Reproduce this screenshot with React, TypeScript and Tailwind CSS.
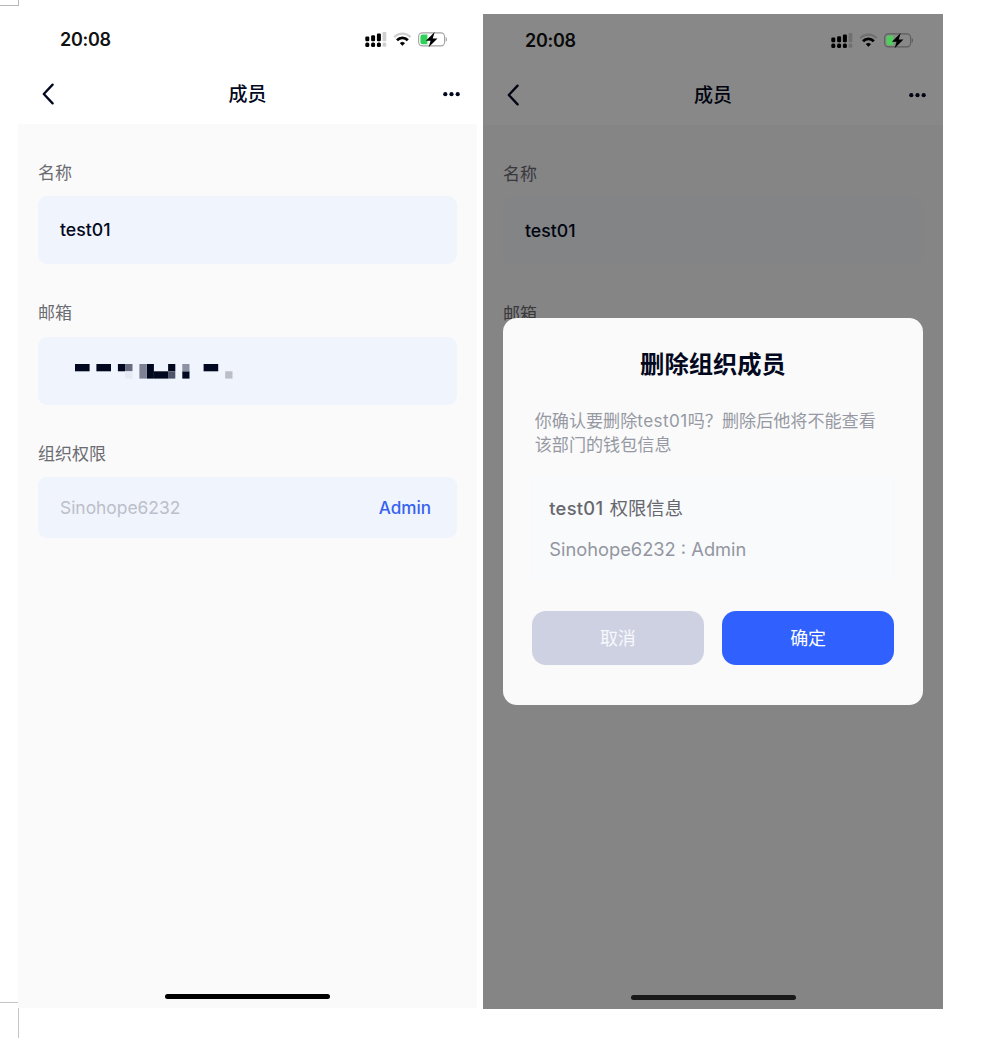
import React from "react";

function StatusIcons({ dimmed = false }: { dimmed?: boolean }) {
  const faint = dimmed ? "#707070" : "#cfcfcf";
  const outline = dimmed ? "#5c5c5c" : "#a3a3a3";
  return (
    <svg className={dimmed ? "relative z-10" : ""} width="82" height="17" viewBox="0 0 82 17" fill="none">
      <g fill="#000">
        <rect x="0.3" y="5.6" width="4" height="4.6" rx="1.2" />
        <rect x="6.1" y="4.2" width="4" height="6" rx="1.2" />
        <rect x="11.9" y="2.6" width="4" height="7.6" rx="1.2" />
        <rect x="0.3" y="11.6" width="4" height="4.4" rx="1.5" />
        <rect x="6.1" y="11.6" width="4" height="4.4" rx="1.5" />
        <rect x="11.9" y="11.6" width="4" height="4.4" rx="1.5" />
      </g>
      <rect x="17.5" y="1" width="3.8" height="9.2" rx="1" fill={faint} />
      <rect x="17.5" y="11.6" width="3.8" height="4.2" rx="1.4" fill={faint} />
      <path d="M29.3 6.1C33.8 1.4 41 1.4 45.5 6.1" stroke={faint} strokeWidth="2.4" />
      <path d="M32 9.2C35 6.1 39.8 6.1 42.8 9.2" stroke="#000" strokeWidth="2.8" />
      <path d="M35.3 12.1C36.5 11.1 38.3 11.1 39.5 12.1L37.4 14.4Z" fill="#000" stroke="#000" strokeWidth="0.8" strokeLinejoin="round" />
      <rect x="53.6" y="1.9" width="26" height="13" rx="3.8" stroke={outline} strokeWidth="1.1" />
      <path d="M81 6.6C82 7 82 9.9 81 10.3Z" fill={outline} stroke={outline} strokeWidth="0.6" />
      <path
        d="M57.7 3.6H62.4V13.2H57.7A2.3 2.3 0 0 1 55.4 10.9V5.9A2.3 2.3 0 0 1 57.7 3.6Z"
        fill={dimmed ? "#53cc5f" : "#30d158"}
      />
      <path d="M69.7 1L60.9 9.7H65.6L63.6 16.3L72.5 7.5H67.7Z" fill="#000" />
    </svg>
  );
}

function Mosaic() {
  return (
    <svg width="158" height="15" viewBox="0 0 158 15">
      <g fill="#020820">
        <rect x="0" y="0" width="14.6" height="7.3" />
        <rect x="21.4" y="0" width="14.6" height="7.3" />
        <rect x="42.9" y="0" width="7.2" height="7.3" />
        <rect x="71.7" y="0" width="7.2" height="14.6" />
        <rect x="78.8" y="7.3" width="14.4" height="7.3" />
        <rect x="93.1" y="0" width="7.2" height="7.3" />
        <rect x="107.3" y="7.3" width="7.2" height="7.3" />
        <rect x="128.6" y="0" width="14.6" height="7.3" />
      </g>
      <rect x="50.1" y="0" width="7.4" height="7.3" fill="#676c7e" />
      <rect x="50.1" y="7.3" width="7.4" height="7.3" fill="#e6e9f4" />
      <rect x="64.4" y="0" width="7.3" height="14.6" fill="#7e8293" />
      <rect x="93.1" y="7.3" width="7.2" height="7.3" fill="#4e546b" />
      <rect x="107.3" y="0" width="7.2" height="7.3" fill="#8d92a3" />
      <rect x="150.2" y="7.3" width="7.3" height="7.3" fill="#bbbec9" />
    </svg>
  );
}

function Field({ label, children, className }: { label: string; children: React.ReactNode; className: string }) {
  return (
    <section>
      <h2 className="h-6 text-[17px] leading-[25px] text-[#6b6b72]">{label}</h2>
      <div className={`flex items-center rounded-[9px] px-[22px] ${className}`}>{children}</div>
    </section>
  );
}

function MemberScreen({ dimmed = false }: { dimmed?: boolean }) {
  const fieldColor = dimmed ? "bg-[#f3f7fb]" : "bg-[#f0f4fc]";
  return (
    <div className="flex h-[995px] flex-col bg-[#fafafa]">
      <header className="h-[111px] shrink-0 bg-white">
        <div className="flex h-[52px] items-center justify-between pr-[30px] pl-[42px]">
          <time className="pt-[2px] text-[18px] leading-none font-semibold tracking-[-0.3px] text-[#111]">20:08</time>
          <StatusIcons dimmed={dimmed} />
        </div>
        <nav className="grid h-[58px] grid-cols-3 items-center px-[24px]">
          <svg width="14" height="22" viewBox="0 0 14 22" fill="none">
            <path d="M10.6 1.6L1.8 11L10.6 20.4" stroke="#020820" strokeWidth="2.3" strokeLinecap="round" strokeLinejoin="round" />
          </svg>
          <h1 className="text-center text-[19px] leading-none font-medium text-[#020820]">成员</h1>
          <svg className="-mr-[7px] justify-self-end" width="17" height="5" viewBox="0 0 17 5" fill="#020820">
            <circle cx="2.3" cy="2.2" r="2.1" />
            <circle cx="8.5" cy="2.2" r="2.1" />
            <circle cx="14.7" cy="2.2" r="2.1" />
          </svg>
        </nav>
      </header>
      <main className="flex flex-1 flex-col gap-[37px] px-5 pt-[37px]">
        <Field label="名称" className={`mt-[11px] h-[68px] ${fieldColor}`}>
          <span className="text-[17.7px] leading-6 font-medium text-[#020820]">test01</span>
        </Field>
        <Field label="邮箱" className={`mt-3 h-[68px] pl-[37px] ${fieldColor}`}>
          <Mosaic />
        </Field>
        <Field label="组织权限" className={`mt-[11px] h-[61px] justify-between pr-[26px] ${fieldColor}`}>
          <span className="pt-px text-[17.4px] leading-6 text-[#bcbfca]">Sinohope6232</span>
          <span className="pt-px text-[17.1px] leading-6 font-medium text-[#3563f0]">Admin</span>
        </Field>
      </main>
      <div className={`mb-[9px] h-[5.5px] w-[165px] self-center rounded-full ${dimmed ? "bg-[#303030]" : "bg-black"}`} />
    </div>
  );
}

function DeleteDialog() {
  return (
    <div role="dialog" className="h-[386.5px] w-[420.5px] rounded-[14px] bg-[#fafafa] px-[29px] pt-[30px]">
      <h2 className="text-center text-[24.3px] leading-8 font-bold text-[#020820]">删除组织成员</h2>
      <p className="mt-[29px] ml-[3px] text-[17.1px] leading-6 whitespace-nowrap text-[#9699a3]">
        你确认要删除<span className="tracking-[0.45px]">test01</span>吗？删除后他将不能查看
        <br />
        该部门的钱包信息
      </p>
      <div className="mt-[19px] h-[104px] border-x border-[#f7f7fd] bg-[#f8fafc] px-[16.5px] pt-5">
        <p className="flex gap-[6.5px] text-[18.3px] leading-6 text-[#66676d]">
          <span className="font-medium tracking-[0.3px]">test01</span>
          <span>权限信息</span>
        </p>
        <p className="mt-[17px] text-[18.3px] leading-6 text-[#9396a0]">Sinohope6232 : Admin</p>
      </div>
      <div className="mt-[31px] flex gap-[18px]">
        <button className="h-[54px] flex-1 rounded-[14px] bg-[#ced1e2] pt-px text-[18px] text-[#f7f8fc]">取消</button>
        <button className="h-[54px] flex-1 rounded-[14px] bg-[#3061ff] pt-px text-[18px] text-white">确定</button>
      </div>
    </div>
  );
}

export default function App() {
  return (
    <div className="h-[1038px] w-[988px] overflow-hidden bg-white font-['Inter','Noto_Sans_CJK_SC',sans-serif]">
      <div className="h-[13px]">
        <div className="h-[6px] w-[19px] border-r border-b border-[#b8b8b8]" />
      </div>
      <div className="flex h-[995px]">
        <div className="w-[18px] pt-[989px]">
          <div className="border-t border-[#c4c4c4]" />
        </div>
        <div className="w-[459px]">
          <MemberScreen />
        </div>
        <div className="relative mt-px ml-[6px] h-[995px] w-[460px]">
          <MemberScreen dimmed />
          <div className="absolute inset-0 flex items-start justify-center bg-black/[0.465] pt-[304px]">
            <DeleteDialog />
          </div>
        </div>
      </div>
      <div className="ml-[18px] h-[30px] border-l border-[#c4c4c4]" />
    </div>
  );
}
